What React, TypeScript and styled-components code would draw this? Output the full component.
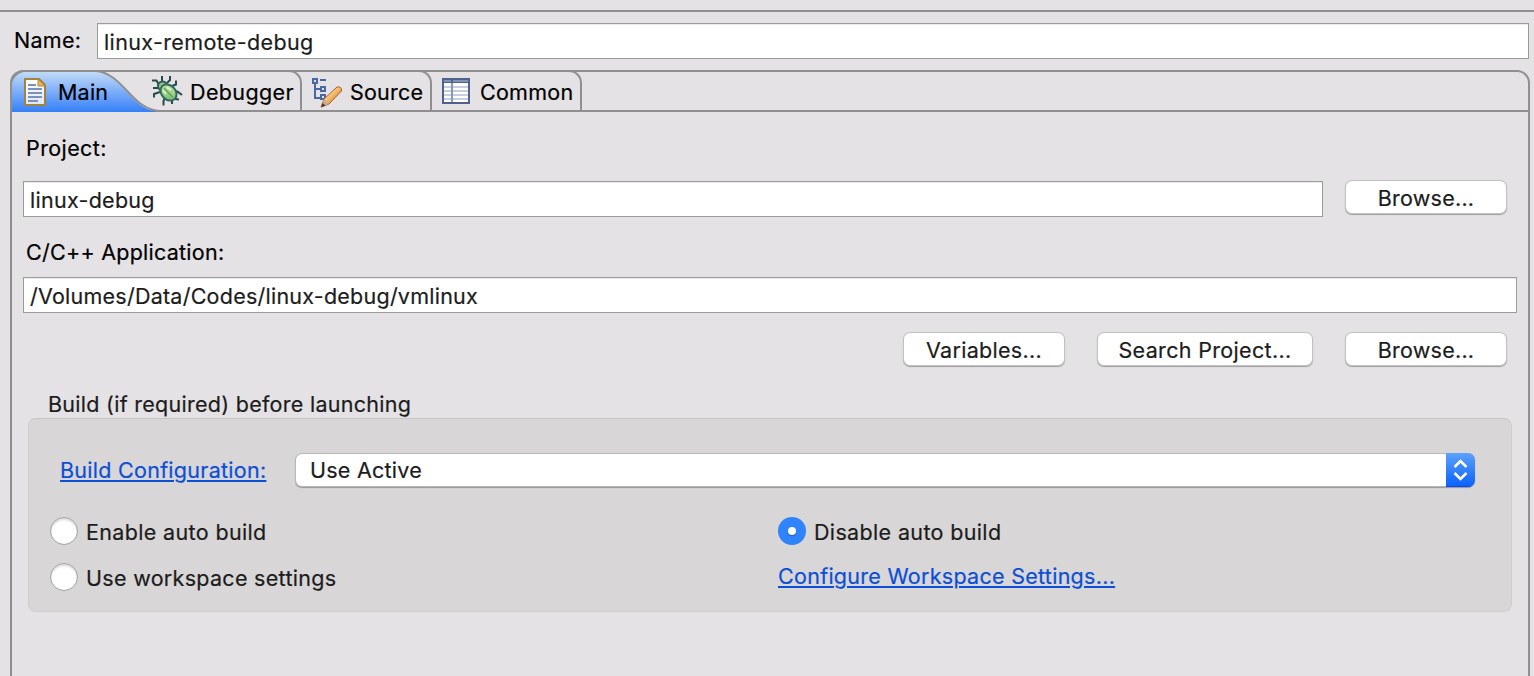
import React from "react";
import styled, { createGlobalStyle } from "styled-components";

const Global = createGlobalStyle`
  * { box-sizing: border-box; }
  body { margin: 0; background: #e4e2e4; overflow: hidden; }
`;

const LINE = "#8f8f8f";

const Window = styled.main`
  height: 676px;
  padding-top: 10px;
  display: flex;
  flex-direction: column;
  background: #e4e2e4;
  color: #000;
  font: 21.5px/26px Inter, "Liberation Sans", sans-serif;
  -webkit-text-stroke: 0.2px currentColor;
  white-space: nowrap;
`;

const TopRule = styled.div`
  height: 2px;
  flex: none;
  background: ${LINE};
`;

const Text = styled.span<{ $track?: number }>`
  display: block;
  height: 26px;
  letter-spacing: ${(p) => p.$track ?? 0.3}px;
`;

const Header = styled.div`
  height: 58px;
  flex: none;
  display: flex;
  align-items: flex-start;
  padding: 11px 5px 0 14px;
`;

const NameLabel = styled.div`
  width: 83px;
  padding-top: 4px;
`;

const Field = styled.div`
  flex: 1 0 36px;
  height: 36px;
  padding: 5px 6px 0;
  border: 1px solid #9b9b9b;
  background: #fff;
  box-shadow: inset 0 1px 0 #ececec;
  color: #1c1c1c;
`;

const Folder = styled.section`
  flex: 1;
  margin: 0 4px 0 10px;
  border: 2px solid ${LINE};
  border-bottom: 0;
  border-radius: 13px 13px 0 0;
`;

const TabStrip = styled.nav`
  height: 40px;
  display: flex;
  border-bottom: 2px solid ${LINE};
`;

const Tab = styled.div<{ $width: number; $pad: number; $gap?: number }>`
  width: ${(p) => p.$width}px;
  height: 40px;
  margin-top: -2px;
  padding: 5px 0 0 ${(p) => p.$pad}px;
  display: flex;
  align-items: flex-start;
  gap: ${(p) => p.$gap ?? 8}px;
  border: solid ${LINE};
  border-width: 2px 2px 0 0;
  border-top-right-radius: 13px;
`;

const ActiveTab = styled.div`
  position: relative;
  width: 138px;
  height: 40px;
  padding: 5px 0 0 10px;
  display: flex;
  align-items: flex-start;
  gap: 8px;
`;

const ActiveShape = styled.svg`
  position: absolute;
  left: -2px;
  top: -2px;
`;

const TabIcon = styled.svg`
  position: relative;
  flex: none;
  overflow: visible;
`;

const TabText = styled(Text)`
  position: relative;
  padding-top: 2px;
`;

const Panel = styled.div`
  padding: 23px 11px 0;
  display: flex;
  flex-direction: column;
`;

const FieldLabel = styled.div<{ $bottom: number }>`
  padding-left: 3px;
  margin-bottom: ${(p) => p.$bottom}px;
`;

const ProjectRow = styled.div`
  display: flex;
  height: 37px;
  gap: 22px;
  padding-right: 10px;
  margin-bottom: 22px;
`;

const ProjectField = styled(Field)`
  margin-top: 1px;
`;

const Button = styled.div<{ $width: number }>`
  width: ${(p) => p.$width}px;
  height: 34px;
  padding-top: 5px;
  display: flex;
  justify-content: center;
  border-radius: 7px;
  background: #fff;
  color: #1c1c1c;
  box-shadow: inset 0 0 0 1px rgba(0, 0, 0, 0.24), 0 1px 1px rgba(0, 0, 0, 0.3);
`;

const ButtonRow = styled.div`
  display: flex;
  justify-content: flex-end;
  gap: 32px;
  padding-right: 10px;
  margin: 19px 0 25px;
`;

const GroupTitle = styled.div`
  padding-left: 25px;
  margin-bottom: 1px;
  color: #1c1c1c;
`;

const Group = styled.div`
  height: 194px;
  margin: 0 5px;
  padding: 34px 36px 0 21px;
  border: 1px solid #cfcdcf;
  border-top-color: #c6c4c6;
  border-radius: 8px;
  background: #d8d6d7;
`;

const ConfigRow = styled.div`
  display: flex;
  padding-left: 10px;
  height: 64px;
`;

const Link = styled.a`
  display: block;
  height: 26px;
  color: #0b4fd6;
  text-decoration: underline;
  text-decoration-thickness: 2px;
  text-underline-offset: 2px;
`;

const ConfigLabel = styled.div`
  width: 235px;
  padding-top: 4px;
`;

const Select = styled.div`
  flex: 1;
  height: 34px;
  display: flex;
  justify-content: space-between;
  padding-left: 15px;
  border-radius: 7px;
  background: #fff;
  overflow: hidden;
  color: #1c1c1c;
  box-shadow: inset 0 0 0 1px rgba(0, 0, 0, 0.28), 0 1px 1px rgba(0, 0, 0, 0.3);
`;

const SelectValue = styled.div`
  padding-top: 4px;
`;

const Stepper = styled.div`
  width: 29px;
  height: 34px;
  background: linear-gradient(#5ba2f9, #0a60ff);
  box-shadow: inset 0 -1px 0 #0a4fe0;
`;

const Options = styled.div`
  display: grid;
  grid-template-columns: 728px 1fr;
  row-gap: 18px;
`;

const Option = styled.div`
  display: flex;
  gap: 8px;
  height: 28px;
  color: #1c1c1c;
`;

const OptionText = styled.div`
  padding-top: 2px;
`;

const Radio = styled.div<{ $on?: boolean }>`
  width: 28px;
  height: 28px;
  display: grid;
  place-items: center;
  border-radius: 50%;
  background: ${(p) => (p.$on ? "#2f83fb" : "#fff")};
  border: ${(p) => (p.$on ? "0" : "1px solid #a0a0a0")};
  box-shadow: ${(p) => (p.$on ? "none" : "inset 0 2px 2px rgba(0,0,0,.14)")};
`;

const Dot = styled.div`
  width: 8px;
  height: 8px;
  border-radius: 50%;
  background: #fff;
  box-shadow: 0 1px 1px rgba(0, 0, 0, 0.3);
`;

const DocIcon = () => (
  <TabIcon width="28" height="30" viewBox="0 0 28 30">
    <defs>
      <linearGradient id="doc" x1="0" y1="0" x2="0" y2="1">
        <stop offset="0" stopColor="#fff" />
        <stop offset="1" stopColor="#dce8f8" />
      </linearGradient>
    </defs>
    <path d="M3 2H17L23 8V28H3Z" fill="url(#doc)" stroke="#a5823c" strokeWidth="2" />
    <path d="M16 2L23 9H16Z" fill="#e3b65a" stroke="#b68b39" />
    <path d="M6 8h8M6 12h14M6 16h14M6 20h14M6 24h10" stroke="#7c90bd" strokeWidth="2" />
  </TabIcon>
);

const BugIcon = () => (
  <TabIcon width="30" height="30" viewBox="0 0 30 30">
    <defs>
      <linearGradient id="bug" x1="0" y1="0" x2="1" y2="1">
        <stop offset="0" stopColor="#d3edb4" />
        <stop offset="1" stopColor="#6cb660" />
      </linearGradient>
    </defs>
    <path
      d="M10 -1V3L11 7M18 -1V3L15 6M0 3.500H4.500L7 8M24 3.500V7.500L20 9M1 11H7M30 18L26 15L22 13.500M2 20.500V17L8 15M11.500 28.500V24L13 21M23 22L27 22.500M20 24V27"
      fill="none"
      stroke="#29494c"
      strokeWidth="2"
    />
    <circle cx="10.500" cy="9" r="4.500" fill="#8cc67c" stroke="#2d5b55" strokeWidth="2" />
    <ellipse cx="16.500" cy="15.500" rx="9" ry="7" transform="rotate(45 16.5 15.5)" fill="url(#bug)" stroke="#2d6b62" strokeWidth="2" />
    <path d="M12 11L21 20.500" stroke="#5f9d58" strokeWidth="1.2" />
    <path d="M11 13.500L14 17M15 10.500L19 13" stroke="#e6f7d3" strokeWidth="1.5" />
  </TabIcon>
);

const SourceIcon = () => (
  <TabIcon width="32" height="32" viewBox="0 0 32 32">
    <defs>
      <linearGradient id="pencil" x1="0" y1="0" x2="1" y2="1">
        <stop offset="0.3" stopColor="#ffdda0" />
        <stop offset="0.75" stopColor="#dc872c" />
      </linearGradient>
    </defs>
    <path
      d="M1 2h4v4H1ZM8 3h6M3 6v15h6M3 12h6M9 10h4v4H9ZM9 18h4v4H9Z"
      fill="none"
      stroke="#4a67a5"
      strokeWidth="2"
    />
    <path d="M9 30L12 22L25 10Q30 9 29.500 14L17 27Z" fill="url(#pencil)" stroke="#a86425" strokeWidth="1" />
    <path d="M9 30L12 22L17 27Z" fill="#cba98c" />
    <path d="M9 30.500L10.500 26L13.500 28.500Z" fill="#41393d" />
  </TabIcon>
);

const TableIcon = () => (
  <TabIcon width="30" height="30" viewBox="0 0 30 30">
    <path d="M1 2h26v24H1Z" fill="#fff" stroke="#50628c" strokeWidth="2" />
    <path d="M0 1h28v5H0Z" fill="#50628c" />
    <path d="M2 4h7M11 4h15" stroke="#8194b8" strokeWidth="2" />
    <path d="M2 10h24M2 14h24M2 18h24M2 22h24" stroke="#c5cfdf" strokeWidth="2" />
    <path d="M10 6v19" stroke="#8798b9" strokeWidth="2" />
  </TabIcon>
);

export default function App() {
  return (
    <Window>
      <Global />
      <TopRule />
      <Header>
        <NameLabel><Text>Name:</Text></NameLabel>
        <Field><Text $track={0.37}>linux-remote-debug</Text></Field>
      </Header>
      <Folder>
        <TabStrip>
          <ActiveTab>
            <ActiveShape width="150" height="42" viewBox="0 0 150 42">
              <defs>
                <linearGradient id="active" x1="0" y1="0" x2="0" y2="1">
                  <stop offset="0" stopColor="#c1daf8" />
                  <stop offset="1" stopColor="#3580f8" />
                </linearGradient>
              </defs>
              <path d="M2 42V12Q4 4 13 2H86C114 5 119 38 148 42Z" fill="url(#active)" />
              <path d="M1 42V13Q3 4 13 1H86C114 4 120 38 149 41" fill="none" stroke={LINE} strokeWidth="2" />
            </ActiveShape>
            <DocIcon />
            <TabText $track={0.2}>Main</TabText>
          </ActiveTab>
          <Tab $width={152} $pad={2}><BugIcon /><TabText $track={0.37}>Debugger</TabText></Tab>
          <Tab $width={130} $pad={10} $gap={6}><SourceIcon /><TabText $track={0.2}>Source</TabText></Tab>
          <Tab $width={150} $pad={10}><TableIcon /><TabText $track={0.25}>Common</TabText></Tab>
        </TabStrip>
        <Panel>
          <FieldLabel $bottom={19}><Text $track={0.4}>Project:</Text></FieldLabel>
          <ProjectRow>
            <ProjectField><Text $track={0.28}>linux-debug</Text></ProjectField>
            <Button $width={162}><Text $track={0.25}>Browse...</Text></Button>
          </ProjectRow>
          <FieldLabel $bottom={12}><Text $track={0.25}>C/C++ Application:</Text></FieldLabel>
          <Field><Text $track={0.24}>/Volumes/Data/Codes/linux-debug/vmlinux</Text></Field>
          <ButtonRow>
            <Button $width={162}><Text>Variables...</Text></Button>
            <Button $width={216}><Text $track={0.33}>Search Project...</Text></Button>
            <Button $width={162}><Text $track={0.25}>Browse...</Text></Button>
          </ButtonRow>
          <GroupTitle><Text $track={0.28}>Build (if required) before launching</Text></GroupTitle>
          <Group>
            <ConfigRow>
              <ConfigLabel><Link><Text $track={0.27}>Build Configuration:</Text></Link></ConfigLabel>
              <Select>
                <SelectValue><Text $track={0.25}>Use Active</Text></SelectValue>
                <Stepper>
                  <svg width="29" height="34" viewBox="0 0 29 34">
                    <path d="M8.500 14L14.500 8L20.500 14M8.500 20L14.500 26L20.500 20" fill="none" stroke="#fff" strokeWidth="2.500" />
                  </svg>
                </Stepper>
              </Select>
            </ConfigRow>
            <Options>
              <Option><Radio /><OptionText><Text $track={0.35}>Enable auto build</Text></OptionText></Option>
              <Option><Radio $on><Dot /></Radio><OptionText><Text $track={0.35}>Disable auto build</Text></OptionText></Option>
              <Option><Radio /><OptionText><Text>Use workspace settings</Text></OptionText></Option>
              <Link><Text $track={0.28}>Configure Workspace Settings...</Text></Link>
            </Options>
          </Group>
        </Panel>
      </Folder>
    </Window>
  );
}
